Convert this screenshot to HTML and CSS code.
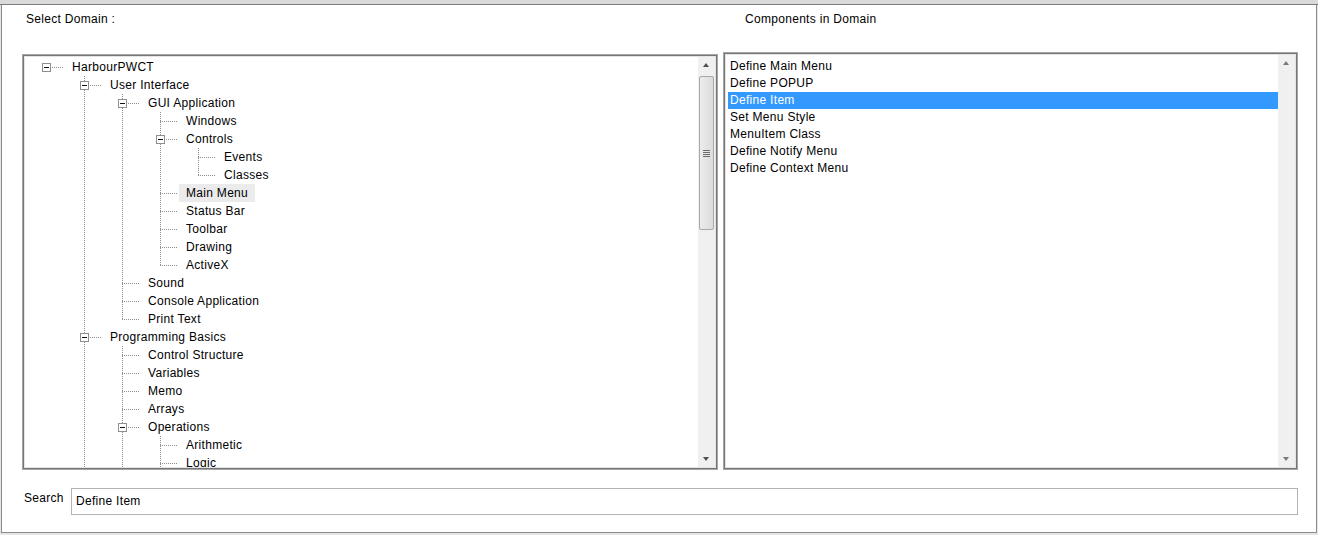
FILE: index.html
```html
<!DOCTYPE html>
<html lang="en">
<head>
	<meta charset="UTF-8">
	<title>Components</title>
	<link rel="stylesheet" href="styles.css">
</head>
<body>
<div class="titlebar"></div>
<div class="frame">
	<div class="captions">
		<span class="cap-left">Select Domain :</span>
		<span class="cap-right">Components in Domain</span>
	</div>

	<div class="panels">
		<div class="panel tree-panel">
			<div class="tree">
				<div class="row"><span class="c n root"><i class="box"></i></span><span class="label">HarbourPWCT</span></div>
				<div class="row"><span class="c"></span><span class="c n mid"><i class="box"></i></span><span class="label">User Interface</span></div>
				<div class="row"><span class="c"></span><span class="c v"></span><span class="c n mid"><i class="box"></i></span><span class="label">GUI Application</span></div>
				<div class="row"><span class="c"></span><span class="c v"></span><span class="c v"></span><span class="c n mid"></span><span class="label">Windows</span></div>
				<div class="row"><span class="c"></span><span class="c v"></span><span class="c v"></span><span class="c n mid"><i class="box"></i></span><span class="label">Controls</span></div>
				<div class="row"><span class="c"></span><span class="c v"></span><span class="c v"></span><span class="c v"></span><span class="c n mid"></span><span class="label">Events</span></div>
				<div class="row"><span class="c"></span><span class="c v"></span><span class="c v"></span><span class="c v"></span><span class="c n"></span><span class="label">Classes</span></div>
				<div class="row"><span class="c"></span><span class="c v"></span><span class="c v"></span><span class="c n mid"></span><span class="label sel">Main Menu</span></div>
				<div class="row"><span class="c"></span><span class="c v"></span><span class="c v"></span><span class="c n mid"></span><span class="label">Status Bar</span></div>
				<div class="row"><span class="c"></span><span class="c v"></span><span class="c v"></span><span class="c n mid"></span><span class="label">Toolbar</span></div>
				<div class="row"><span class="c"></span><span class="c v"></span><span class="c v"></span><span class="c n mid"></span><span class="label">Drawing</span></div>
				<div class="row"><span class="c"></span><span class="c v"></span><span class="c v"></span><span class="c n"></span><span class="label">ActiveX</span></div>
				<div class="row"><span class="c"></span><span class="c v"></span><span class="c n mid"></span><span class="label">Sound</span></div>
				<div class="row"><span class="c"></span><span class="c v"></span><span class="c n mid"></span><span class="label">Console Application</span></div>
				<div class="row"><span class="c"></span><span class="c v"></span><span class="c n"></span><span class="label">Print Text</span></div>
				<div class="row"><span class="c"></span><span class="c n mid"><i class="box"></i></span><span class="label">Programming Basics</span></div>
				<div class="row"><span class="c"></span><span class="c v"></span><span class="c n mid"></span><span class="label">Control Structure</span></div>
				<div class="row"><span class="c"></span><span class="c v"></span><span class="c n mid"></span><span class="label">Variables</span></div>
				<div class="row"><span class="c"></span><span class="c v"></span><span class="c n mid"></span><span class="label">Memo</span></div>
				<div class="row"><span class="c"></span><span class="c v"></span><span class="c n mid"></span><span class="label">Arrays</span></div>
				<div class="row"><span class="c"></span><span class="c v"></span><span class="c n mid"><i class="box"></i></span><span class="label">Operations</span></div>
				<div class="row"><span class="c"></span><span class="c v"></span><span class="c v"></span><span class="c n mid"></span><span class="label">Arithmetic</span></div>
				<div class="row"><span class="c"></span><span class="c v"></span><span class="c v"></span><span class="c n mid"></span><span class="label">Logic</span></div>
			</div>
			<div class="vscroll">
				<div class="arrow up"></div>
				<div class="thumb"><i class="grip"></i></div>
				<div class="track"></div>
				<div class="arrow down"></div>
			</div>
		</div>

		<div class="panel list-panel">
			<ul class="list">
				<li>Define Main Menu</li>
				<li>Define POPUP</li>
				<li class="active">Define Item</li>
				<li>Set Menu Style</li>
				<li>MenuItem Class</li>
				<li>Define Notify Menu</li>
				<li>Define Context Menu</li>
			</ul>
			<div class="vscroll off">
				<div class="arrow up"></div>
				<div class="track"></div>
				<div class="arrow down"></div>
			</div>
		</div>
	</div>

	<div class="search">
		<label class="search-label">Search</label>
		<div class="search-box">Define Item</div>
	</div>
</div>
</body>
</html>
```

FILE: styles.css
```css
*{padding:0; margin:0; box-sizing:border-box;}
body{width:1318px; height:535px; overflow:hidden; background:#e6e6e6; font-family:"Liberation Sans", Arial, sans-serif; font-size:12px; letter-spacing:0.3px; color:#000;}

.titlebar{height:5px; background:#dadada; border-bottom:1px solid #7c7c7c;}
.frame{height:528px; margin:0 1px; background:#fff; border-left:1px solid #8a8a8a; border-right:1px solid #8a8a8a; border-bottom:1px solid #8a8a8a;}

.captions{display:flex; height:21px; padding-top:7px; line-height:14px;}
.cap-left{margin-left:24px; width:719px;}

.panels{display:flex; align-items:flex-start; gap:5px; margin-top:26px; margin-left:20px;}
.panel{display:flex; border:1px solid #a5a5a5; padding:2px; box-shadow:inset 0 0 0 1px #767676, inset 0 0 0 2px #e4e4e4;}
.tree-panel{width:696px; height:416px; margin-top:2px;}
.list-panel{width:575px; height:418px;}

/* tree */
.tree{flex:1; overflow:hidden; padding:1px 0 0 2px;}
.row{display:flex; height:18px;}
.c{position:relative; width:38px; height:18px; flex-shrink:0;}
.v::before, .n::before{content:""; position:absolute; left:19px; top:0; width:1px; height:18px; background:repeating-linear-gradient(to bottom, #8d8d8d 0 1px, transparent 1px 2px);}
.n::before{height:9px;}
.n.mid::before{height:18px;}
.n.root::before{display:none;}
.n::after{content:""; position:absolute; left:19px; top:9px; width:17px; height:1px; background:repeating-linear-gradient(to right, #8d8d8d 0 1px, transparent 1px 2px);}
.box{position:absolute; left:15px; top:5px; width:9px; height:9px; border:1px solid #8f8f8f; background:#fff; z-index:1;}
.box::after{content:""; position:absolute; left:1px; top:3px; width:5px; height:1px; background:#111;}
.label{height:18px; line-height:18px; padding:0 7px; white-space:nowrap;}
.label.sel{background:#ebebeb;}

/* scrollbars */
.vscroll{width:17px; display:flex; flex-direction:column; background:#f0f0f0; flex-shrink:0;}
.arrow{height:17px; position:relative;}
.arrow::after{content:""; position:absolute; left:5px; border-left:3.5px solid transparent; border-right:3.5px solid transparent;}
.arrow.up::after{top:6px; border-bottom:4px solid #505050;}
.arrow.down::after{top:7px; border-top:4px solid #505050;}
.vscroll.off .arrow.up::after{border-bottom-color:#7a7a7a;}
.vscroll.off .arrow.down::after{border-top-color:#7a7a7a;}
.thumb{height:154px; margin:2px 1px 0; border:1px solid #a8a8a8; border-radius:2px; background:linear-gradient(to right, #ececec, #dcdcdc); display:flex; align-items:center; justify-content:center;}
.grip{width:7px; height:7px; background:repeating-linear-gradient(to bottom, #6e6e6e 0 1px, transparent 1px 2px);}
.track{flex:1;}

/* list */
.list{flex:1; list-style:none; padding:3px 0 0 2px;}
.list li{height:17px; line-height:17px; padding-left:2px; white-space:nowrap;}
.list li.active{background:#3399ff; color:#fff;}

/* search */
.search{display:flex; align-items:flex-start; margin-top:18px; margin-left:22px;}
.search-label{width:47px; padding-top:3px; line-height:14px;}
.search-box{width:1227px; height:27px; border:1px solid #b3b3b3; line-height:25px; padding-left:4px;}
```
